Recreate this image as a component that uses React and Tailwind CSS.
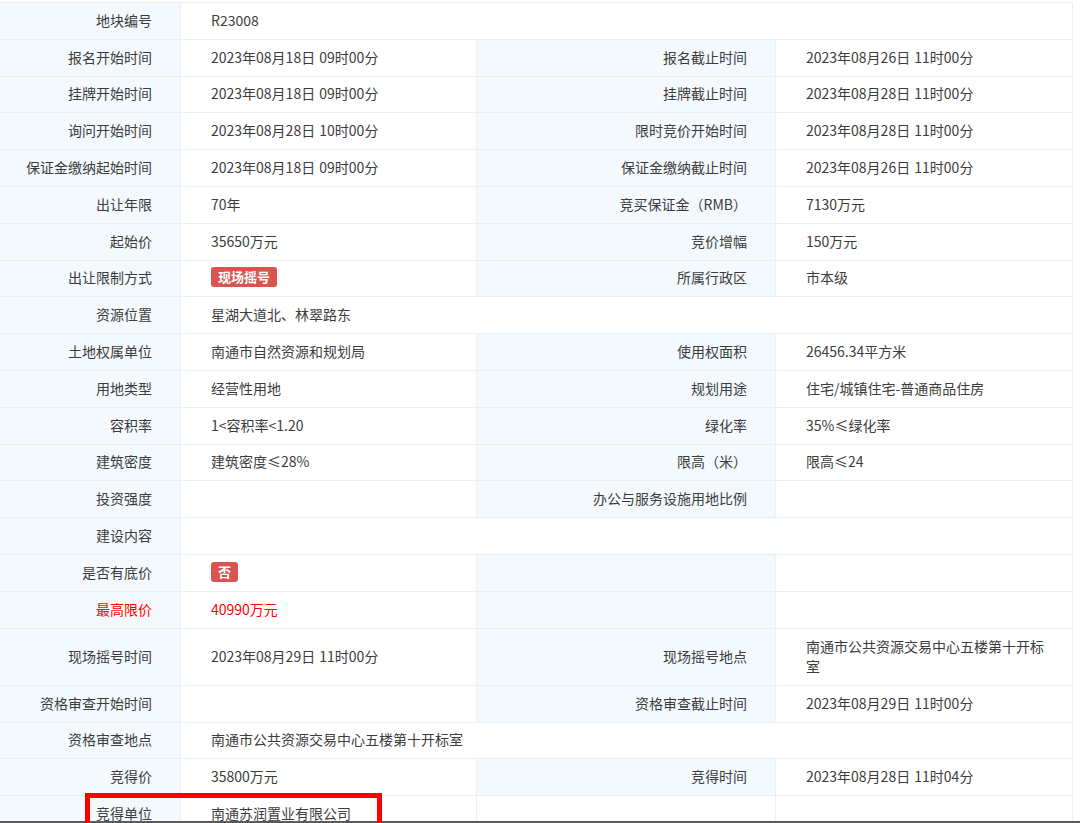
import React from "react";

const rows = [
  { l1: "地块编号", v1: "R23008", span: true },
  { l1: "报名开始时间", v1: "2023年08月18日 09时00分", l2: "报名截止时间", v2: "2023年08月26日 11时00分" },
  { l1: "挂牌开始时间", v1: "2023年08月18日 09时00分", l2: "挂牌截止时间", v2: "2023年08月28日 11时00分" },
  { l1: "询问开始时间", v1: "2023年08月28日 10时00分", l2: "限时竞价开始时间", v2: "2023年08月28日 11时00分" },
  { l1: "保证金缴纳起始时间", v1: "2023年08月18日 09时00分", l2: "保证金缴纳截止时间", v2: "2023年08月26日 11时00分" },
  { l1: "出让年限", v1: "70年", l2: "竞买保证金（RMB）", v2: "7130万元" },
  { l1: "起始价", v1: "35650万元", l2: "竞价增幅", v2: "150万元" },
  { l1: "出让限制方式", badge: "现场摇号", l2: "所属行政区", v2: "市本级" },
  { l1: "资源位置", v1: "星湖大道北、林翠路东", span: true },
  { l1: "土地权属单位", v1: "南通市自然资源和规划局", l2: "使用权面积", v2: "26456.34平方米" },
  { l1: "用地类型", v1: "经营性用地", l2: "规划用途", v2: "住宅/城镇住宅-普通商品住房" },
  { l1: "容积率", v1: "1<容积率<1.20", l2: "绿化率", v2: "35%≤绿化率" },
  { l1: "建筑密度", v1: "建筑密度≤28%", l2: "限高（米）", v2: "限高≤24" },
  { l1: "投资强度", v1: "", l2: "办公与服务设施用地比例", v2: "" },
  { l1: "建设内容", v1: "", span: true },
  { l1: "是否有底价", badge: "否", l2: "", v2: "" },
  { l1: "最高限价", v1: "40990万元", l2: "", v2: "", red: true },
  { l1: "现场摇号时间", v1: "2023年08月29日 11时00分", l2: "现场摇号地点", v2: "南通市公共资源交易中心五楼第十开标室", tall: true },
  { l1: "资格审查开始时间", v1: "", l2: "资格审查截止时间", v2: "2023年08月29日 11时00分" },
  { l1: "资格审查地点", v1: "南通市公共资源交易中心五楼第十开标室", span: true },
  { l1: "竞得价", v1: "35800万元", l2: "竞得时间", v2: "2023年08月28日 11时04分" },
  { l1: "竞得单位", v1: "南通苏润置业有限公司", l2: "", v2: "", plain: true },
];

const Badge = ({ text }) => (
  <span className="inline-block rounded-[3px] bg-[#d9534f] px-[7px] text-[13px] font-bold leading-[20px] text-white">
    {text}
  </span>
);

const App = () => {
  return (
    <div
      className="relative flex h-[823px] w-[1080px] flex-col overflow-hidden bg-white text-[14px] leading-[20px] text-[#3c3c3c]"
      style={{ fontFamily: '"Noto Sans CJK SC", "Noto Sans", sans-serif' }}
    >
      <div className="flex-1 overflow-hidden pt-[2px]">
        <div className="w-[1073px] border-t border-r border-[#eceff1]">
          {rows.map((r, i) => (
            <div
              key={i}
              className={`flex border-b border-[#eceff1] ${r.tall ? "h-[57.2px]" : "h-[36.8px]"}`}
            >
              <div
                className={`flex w-[181px] shrink-0 items-center justify-end border-r border-[#eceff1] bg-[#f3f9fd] pr-[28px] pb-[2px] ${r.red ? "text-[#ff0000]" : ""}`}
              >
                {r.l1}
              </div>
              {r.span ? (
                <div className="flex flex-1 items-center pl-[30px] pb-[2px] [word-spacing:1px]">{r.v1}</div>
              ) : (
                <>
                  <div
                    className={`flex w-[296px] shrink-0 items-center border-r border-[#eceff1] pl-[30px] pb-[2px] [word-spacing:1px] ${r.red ? "text-[#ff0000]" : ""}`}
                  >
                    {r.badge ? <Badge text={r.badge} /> : r.v1}
                  </div>
                  <div
                    className={`flex w-[299px] shrink-0 items-center justify-end border-r border-[#eceff1] pr-[28px] pb-[2px] ${r.plain ? "bg-white" : "bg-[#f3f9fd]"}`}
                  >
                    {r.l2}
                  </div>
                  <div className="flex flex-1 items-center pl-[30px] pr-[20px] pb-[2px] [word-spacing:1px]">
                    {r.v2}
                  </div>
                </>
              )}
            </div>
          ))}
        </div>
      </div>
      <div className="h-[2px] w-full shrink-0 bg-[#5a5a5a]" />
      {/* highlight box */}
      <div className="absolute left-[85px] top-[793px] h-[40px] w-[297px] border-[5px] border-[#ff0000]" />
    </div>
  );
};

export default App;
